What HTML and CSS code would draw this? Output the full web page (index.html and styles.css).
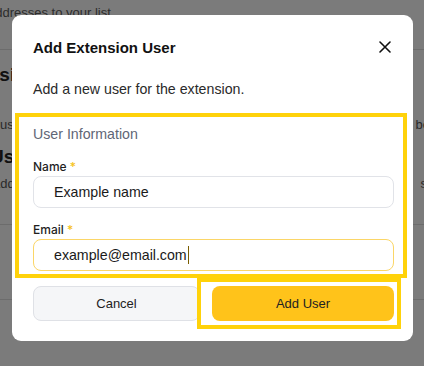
FILE: index.html
```html
<!DOCTYPE html>
<html lang="en">
<head>
    <meta charset="UTF-8">
    <meta name="viewport" content="width=device-width, initial-scale=1.0">
    <title>Extension Users</title>
    <link rel="stylesheet" href="styles.css">
</head>
<body>
    <!-- page behind the dialog -->
    <div class="page">
        <p class="page-intro">addresses to your list</p>
        <div class="page-section">
            <h2>Permissions</h2>
            <p class="page-row row-one"><span>users</span><span>be</span></p>
            <h2 class="sub">Users</h2>
            <p class="page-row row-two"><span>add</span><span>si</span></p>
        </div>
        <div class="page-section short"></div>
    </div>

    <div class="overlay">
        <div class="dialog">
            <div class="dialog-head">
                <h1>Add Extension User</h1>
                <button class="close-btn" aria-label="Close">
                    <svg width="12" height="12" viewBox="0 0 12 12">
                        <path d="M1 1L11 11M11 1L1 11" stroke="#111" stroke-width="1.6" stroke-linecap="round"/>
                    </svg>
                </button>
            </div>
            <p class="dialog-desc">Add a new user for the extension.</p>

            <div class="section">
                <h3>User Information</h3>
                <label class="field-label">Name <span class="req">*</span></label>
                <div class="input">Example name</div>
                <label class="field-label">Email <span class="req">*</span></label>
                <div class="input focused">example@email.com<span class="caret"></span></div>
            </div>

            <div class="actions">
                <button class="btn btn-cancel">Cancel</button>
                <button class="btn btn-add">Add User</button>
            </div>

            <!-- annotation boxes -->
            <div class="mark mark-form"></div>
            <div class="mark mark-submit"></div>
        </div>
    </div>
</body>
</html>
```

FILE: styles.css
```css
* {
    margin: 0;
    padding: 0;
    box-sizing: border-box;
}

body {
    font-family: "Liberation Sans", Arial, sans-serif;
    background-color: #f6f6f6;
    color: #1f1f1f;
    width: 424px;
    height: 366px;
    overflow: hidden;
    position: relative;
}

/* Background page */
.page {
    margin-left: -12px;
    width: 460px;
}

.page-intro {
    font-size: 13px;
    color: #5a5a5a;
    padding: 5px 0 0 0;
    height: 50px;
    border-bottom: 1px solid #d8d8d8;
}

.page-section {
    height: 175px;
    padding-top: 14px;
    border-bottom: 1px solid #d8d8d8;
}

.page-section.short {
    height: 75px;
}

.page-section h2 {
    font-size: 19px;
    font-weight: 700;
    line-height: 22px;
    margin-left: -52px;
    color: #222;
}

.page-section h2.sub {
    margin-left: 2px;
}

.page-row {
    display: flex;
    justify-content: space-between;
    font-size: 13px;
    line-height: 15px;
    color: #555;
    padding-right: 18px;
}

.row-one {
    padding-top: 31px;
    padding-bottom: 14px;
}

.row-one span:first-child {
    margin-left: 12px;
}

.row-two {
    padding-top: 8px;
}

.row-two span:first-child {
    margin-left: 5px;
}

/* Dialog */
.overlay {
    position: absolute;
    inset: 0;
    background-color: rgba(0, 0, 0, 0.5);
    padding: 15px 11px 0 12px;
}

.dialog {
    position: relative;
    width: 401px;
    height: 326px;
    background-color: #fff;
    border-radius: 9px;
    padding: 20px 19px 20px 21px;
}

.dialog-head {
    display: flex;
    justify-content: space-between;
    align-items: center;
    height: 24px;
}

.dialog-head h1 {
    font-size: 15px;
    font-weight: 700;
    color: #111;
}

.close-btn {
    background: none;
    border: none;
    display: flex;
    margin-right: 3px;
}

.dialog-desc {
    font-size: 14.2px;
    line-height: 20px;
    color: #2a2a2a;
    margin-top: 20px;
}

.section {
    margin-top: 25px;
}

.section h3 {
    font-size: 14.2px;
    font-weight: 400;
    line-height: 20px;
    color: #5f6676;
    margin-bottom: 15px;
}

.field-label {
    display: block;
    font-family: Inter, "Liberation Sans", sans-serif;
    font-size: 12px;
    font-weight: 500;
    line-height: 16px;
    color: #1f1f1f;
    margin-bottom: 1px;
}

.req {
    color: #f6c31c;
}

.input {
    height: 32px;
    border: 1px solid #e1e3e8;
    border-radius: 8px;
    font-size: 14.2px;
    line-height: 30px;
    padding-left: 20px;
    color: #1a1a1a;
    margin-bottom: 14px;
}

.input.focused {
    border-color: #fbd667;
    margin-bottom: 0;
}

.caret {
    display: inline-block;
    width: 1.5px;
    height: 18px;
    background-color: #7a5d00;
    vertical-align: -4px;
    margin-left: 1px;
}

.actions {
    display: flex;
    gap: 12px;
    margin-top: 15px;
}

.btn {
    height: 35px;
    border-radius: 8px;
    font-family: "Liberation Sans", Arial, sans-serif;
    font-size: 13px;
    color: #222;
    cursor: pointer;
}

.btn-cancel {
    flex: 0 0 167px;
    background-color: #f5f6f8;
    border: 1px solid #dfe1e6;
}

.btn-add {
    flex: 1;
    background-color: #ffc31a;
    border: none;
}

/* Highlight annotations */
.mark {
    position: absolute;
    border: 4px solid #ffd20a;
    pointer-events: none;
}

.mark-form {
    left: 3px;
    top: 98px;
    width: 392px;
    height: 165px;
}

.mark-submit {
    left: 185px;
    top: 263px;
    width: 204px;
    height: 51px;
}
```
